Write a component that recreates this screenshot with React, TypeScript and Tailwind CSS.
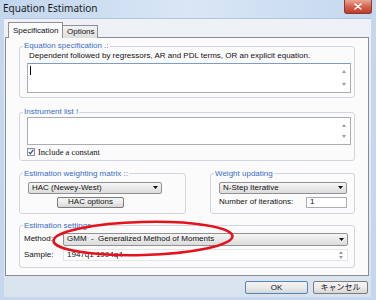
import type { ReactNode } from 'react'

const UI_FONT = "font-['Liberation_Sans','Noto_Sans_CJK_JP',sans-serif]"

function GroupBox({
  label,
  className = '',
  innerClassName = '',
  children,
}: {
  label: ReactNode
  className?: string
  innerClassName?: string
  children: ReactNode
}) {
  return (
    <fieldset className={`border border-[#cfd6dd] rounded-[3px] ${className}`}>
      <legend className="ml-[3px] px-[1px] text-[8px] leading-[10px] text-[#3a6cc6]">{label}</legend>
      <div className={innerClassName}>{children}</div>
    </fieldset>
  )
}

function Arrow() {
  return (
    <svg width="5" height="3" viewBox="0 0 5 3" className="shrink-0">
      <path d="M0 0h5L2.5 3z" fill="#111" />
    </svg>
  )
}

function Dropdown({ value, className = '' }: { value: string; className?: string }) {
  return (
    <div
      className={`flex items-center justify-between border border-[#8f9196] rounded-[2px] bg-gradient-to-b from-[#f6f6f6] to-[#dcdcdc] pl-[3px] pr-[3px] text-[8px] leading-none whitespace-pre ${className}`}
    >
      <span>{value}</span>
      <Arrow />
    </div>
  )
}

// tiny up/down scroll marks on the right of multi-line edits
function ScrollMarks({ className = '' }: { className?: string }) {
  return (
    <div className={`flex flex-col items-center justify-between w-[9px] ${className}`}>
      <svg width="4" height="3" viewBox="0 0 4 3">
        <path d="M0 3h4L2 0z" fill="#9a9a9a" />
      </svg>
      <svg width="4" height="3" viewBox="0 0 4 3">
        <path d="M0 0h4L2 3z" fill="#9a9a9a" />
      </svg>
    </div>
  )
}

function Button({ children, isDefault = false, className = '' }: { children: ReactNode; isDefault?: boolean; className?: string }) {
  return (
    <button
      className={`flex items-center justify-center rounded-[2px] border bg-gradient-to-b from-[#f4f4f4] via-[#ebebeb] to-[#d6d6d6] text-[8px] leading-none text-[#111] ${
        isDefault ? 'border-[#4e86c2]' : 'border-[#7c7c7c]'
      } ${className}`}
    >
      {children}
    </button>
  )
}

export default function App() {
  return (
    <div className={`relative w-[376px] h-[300px] overflow-hidden bg-[#c4d7ee] flex flex-col text-[#111] ${UI_FONT}`}>
      {/* title bar */}
      <div className="h-[18px] flex items-start justify-between bg-gradient-to-r from-[#c2d6ee] via-[#d9e6f5] to-[#c4d8ef]">
        <span className="pl-[3px] pt-[2px] text-[10px] leading-[12px] font-['Noto_Sans',sans-serif] text-[#1a1a1a]">
          Equation Estimation
        </span>
        <div className="mr-[4px] w-[28px] h-[14px] flex items-center justify-center rounded-b-[3px] border border-t-0 border-[#8a3b30] bg-gradient-to-b from-[#e8a597] via-[#d4634f] to-[#c0392a]">
          <svg width="8" height="7" viewBox="0 0 8 7">
            <path d="M1 1l6 5M7 1L1 6" stroke="#fff" strokeWidth="1.6" strokeLinecap="round" />
          </svg>
        </div>
      </div>

      {/* client area */}
      <div className="flex-1 flex pl-[4px] pr-[7px] pb-[3px]">
        <div className="flex-1 flex flex-col pt-[3px] bg-gradient-to-b from-[#eef1f5] to-[#d9e3ee] border-t border-[#b3c5dc]">
          {/* tabs */}
          <div className="flex items-end pl-[4px] relative z-10 -mb-px">
            <div className="h-[16px] w-[55px] flex items-center pl-[4px] border border-b-0 border-[#8e9096] bg-[#fbfbfc] text-[8px] leading-none">
              Specification
            </div>
            <div className="h-[13px] w-[35px] flex items-center pl-[4px] border border-l-0 border-b-0 border-[#8e9096] bg-gradient-to-b from-[#f3f3f3] to-[#dedede] text-[8px] leading-none">
              Options
            </div>
          </div>

          {/* tab panel */}
          <div className="ml-[1px] mr-[2px] h-[239px] border border-[#898c95] bg-[#fbfbfc] px-[13px] flex flex-col text-[8px] leading-none">
            <GroupBox label="Equation specification .:" className="mt-[3px]" innerClassName="pl-[7px] pr-[3px] pb-[4px]">
              <div className="pl-[2px] leading-[10px] whitespace-nowrap">
                Dependent followed by regressors, AR and PDL terms, OR an explicit equation.
              </div>
              <div className="mt-[2px] h-[30px] flex border border-[#abadb3] border-t-[#7b9ec8] bg-white">
                <div className="flex-1 pl-[2px] pt-[2px]">
                  <div className="w-px h-[9px] bg-black" />
                </div>
                <ScrollMarks className="py-[6px] mr-[2px]" />
              </div>
            </GroupBox>

            <GroupBox label="Instrument list !" className="mt-[9px]" innerClassName="pl-[7px] pr-[3px] pb-[3px]">
              <div className="h-[28px] flex border border-[#abadb3] bg-white">
                <div className="flex-1" />
                <ScrollMarks className="py-[6px] mr-[2px]" />
              </div>
              <div className="mt-[3px] flex items-center gap-[3px]">
                <div className="w-[8px] h-[8px] flex items-center justify-center border border-[#8f8f8f] bg-gradient-to-b from-[#f0f0f0] to-white">
                  <svg width="6" height="6" viewBox="0 0 6 6">
                    <path d="M0.8 3.2l1.5 1.6L5.3 0.8" stroke="#2a4f8f" strokeWidth="1.2" fill="none" />
                  </svg>
                </div>
                <span className="font-['Liberation_Serif',serif] text-[8.5px]">Include a constant</span>
              </div>
            </GroupBox>

            <div className="mt-[8px] flex gap-[24px]">
              <GroupBox label="Estimation weighting matrix ::" className="w-[167px]" innerClassName="pl-[8px] pb-[5px]">
                <Dropdown value="HAC (Newey-West)" className="mt-[3px] w-[134px] h-[12px]" />
                <Button className="mt-[3px] ml-[29px] w-[67px] h-[11px]">HAC options</Button>
              </GroupBox>
              <GroupBox label="Weight updating" className="w-[145px]" innerClassName="pl-[8px] pb-[5px]">
                <Dropdown value="N-Step Iterative" className="mt-[3px] w-[128px] h-[12px]" />
                <div className="mt-[3px] flex items-center justify-between w-[128px]">
                  <span>Number of iterations:</span>
                  <div className="w-[41px] h-[11px] flex items-center pl-[3px] border border-[#abadb3] bg-white">1</div>
                </div>
              </GroupBox>
            </div>

            <GroupBox label="Estimation settings" className="mt-[7px]" innerClassName="pl-[4px] pr-[6px] pb-[6px]">
              <div className="mt-[2px] flex items-center">
                <span className="w-[39px]">Method:</span>
                <Dropdown value="GMM  -  Generalized Method of Moments" className="flex-1 h-[13px]" />
              </div>
              <div className="mt-[3px] flex items-center">
                <span className="w-[39px]">Sample:</span>
                <div className="flex-1 h-[12px] flex items-center justify-between pl-[3px] border border-[#e3e5e8] bg-white">
                  <span>1947q1 1994q4</span>
                  <ScrollMarks className="h-[8px] mr-[2px]" />
                </div>
              </div>
            </GroupBox>
          </div>

          {/* dialog buttons */}
          <div className="mt-[5px] flex justify-end gap-[5px] pr-[3px]">
            <Button isDefault className="w-[63px] h-[13px]">OK</Button>
            <Button className="w-[55px] h-[13px]">キャンセル</Button>
          </div>
        </div>
      </div>

      {/* red highlight drawn over the method field */}
      <svg className="absolute left-[50px] top-[219px] pointer-events-none" width="186" height="39" viewBox="0 0 186 39">
        <ellipse cx="93" cy="19.5" rx="89.5" ry="16.5" fill="none" stroke="#e5121b" strokeWidth="2.6" transform="rotate(-1.5 93 19.5)" />
      </svg>
    </div>
  )
}
